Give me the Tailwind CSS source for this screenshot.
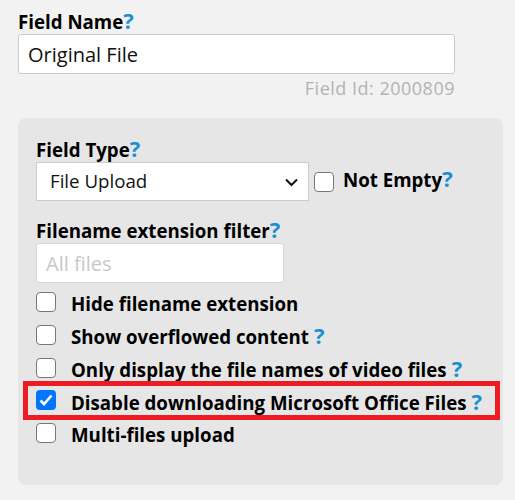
<!DOCTYPE html>
<html lang="en">
<head>
    <meta charset="UTF-8">
    <meta name="viewport" content="width=device-width, initial-scale=1.0">
    <title>Field Settings</title>
    <script src="https://cdn.jsdelivr.net/npm/@tailwindcss/browser@4"></script>
</head>
<body class="bg-[#f2f2f2] text-black font-['Open_Sans',sans-serif] w-[515px] h-[500px] overflow-hidden">

    <div class="pl-[18px] pr-[12px] pt-[10px]">
        <!-- Field name -->
        <div class="text-[18.7px] leading-[24px] font-bold">Field Name<span class="text-[#1a8fd1] font-bold text-[22px] leading-[20px]">?</span></div>
        <input type="text" value="Original File" class="block w-[437px] h-[40px] bg-white border border-[#ccc] rounded-[3px] px-[9px] text-[20px] text-[#111] outline-none">
        <div class="w-[437px] text-right text-[18px] tracking-[0.5px] leading-[22px] text-[#b3b3b3] mt-[3px]">Field Id: 2000809</div>

        <!-- Field type panel -->
        <div class="relative w-[485px] h-[367px] mt-[19px] bg-[#e6e6e6] rounded-[8px] pl-[18px] pt-[20px]">
            <div class="text-[18.7px] leading-[24px] font-bold">Field Type<span class="text-[#1a8fd1] font-bold text-[22px] leading-[20px]">?</span></div>
            <div class="flex items-center">
                <div class="relative w-[273px] h-[39px] bg-white border border-[#ccc] flex items-center pl-[13px] text-[18.7px] text-[#111]">
                    File Upload
                    <svg class="absolute right-[10px] top-[15px]" width="13" height="9" viewBox="0 0 13 9" fill="none" stroke="#111" stroke-width="2"><path d="M1 1.5 L6.5 7 L12 1.5"/></svg>
                </div>
                <span class="block w-[20px] h-[20px] ml-[5px] bg-white border border-[#777] rounded-[4px]"></span>
                <div class="ml-[9px] pb-[2px] text-[18.7px] font-bold">Not Empty<span class="text-[#1a8fd1] font-bold text-[22px] leading-[20px]">?</span></div>
            </div>

            <div class="text-[18.7px] leading-[24px] font-bold mt-[18px]">Filename extension filter<span class="text-[#1a8fd1] font-bold text-[22px] leading-[20px]">?</span></div>
            <div class="w-[248px] h-[40px] bg-white border border-[#d4d4d4] rounded-[3px] px-[9px] pt-[1px] flex items-center text-[20px] text-[#c8c8c8]">All files</div>

            <div class="flex flex-col mt-[9px] gap-[12.75px]">
                <div class="flex items-center h-[20px]">
                    <span class="block w-[20px] h-[20px] bg-white border border-[#777] rounded-[4px]"></span>
                    <span class="ml-[15px] pt-[5px] text-[18.7px] font-bold">Hide filename extension</span>
                </div>
                <div class="flex items-center h-[20px]">
                    <span class="block w-[20px] h-[20px] bg-white border border-[#777] rounded-[4px]"></span>
                    <span class="ml-[15px] pt-[5px] text-[18.7px] font-bold">Show overflowed content</span>
                    <span class="ml-[5px] pt-[2px] text-[#1a8fd1] font-bold text-[22px]">?</span>
                </div>
                <div class="flex items-center h-[20px]">
                    <span class="block w-[20px] h-[20px] bg-white border border-[#777] rounded-[4px]"></span>
                    <span class="ml-[15px] pt-[5px] text-[18.7px] font-bold">Only display the file names of video files</span>
                    <span class="ml-[5px] pt-[2px] text-[#1a8fd1] font-bold text-[22px]">?</span>
                </div>
                <div class="flex items-center h-[20px]">
                    <span class="flex items-center justify-center w-[20px] h-[20px] bg-[#0075ff] rounded-[4px]">
                        <svg width="14" height="12" viewBox="0 0 14 12" fill="none" stroke="#fff" stroke-width="2.6"><path d="M1.5 6.5 L5 10 L12.5 1.5"/></svg>
                    </span>
                    <span class="ml-[15px] pt-[5px] text-[18.7px] font-bold">Disable downloading Microsoft Office Files</span>
                    <span class="ml-[5px] pt-[2px] text-[#1a8fd1] font-bold text-[22px]">?</span>
                </div>
                <div class="flex items-center h-[20px]">
                    <span class="block w-[20px] h-[20px] bg-white border border-[#777] rounded-[4px]"></span>
                    <span class="ml-[15px] pt-[5px] text-[18.7px] font-bold">Multi-files upload</span>
                </div>
            </div>

            <!-- red highlight -->
            <div class="absolute left-[5px] top-[263px] w-[477px] h-[39px] border-[5px] border-[#ed1c24]"></div>
        </div>
    </div>
</body>
</html>
